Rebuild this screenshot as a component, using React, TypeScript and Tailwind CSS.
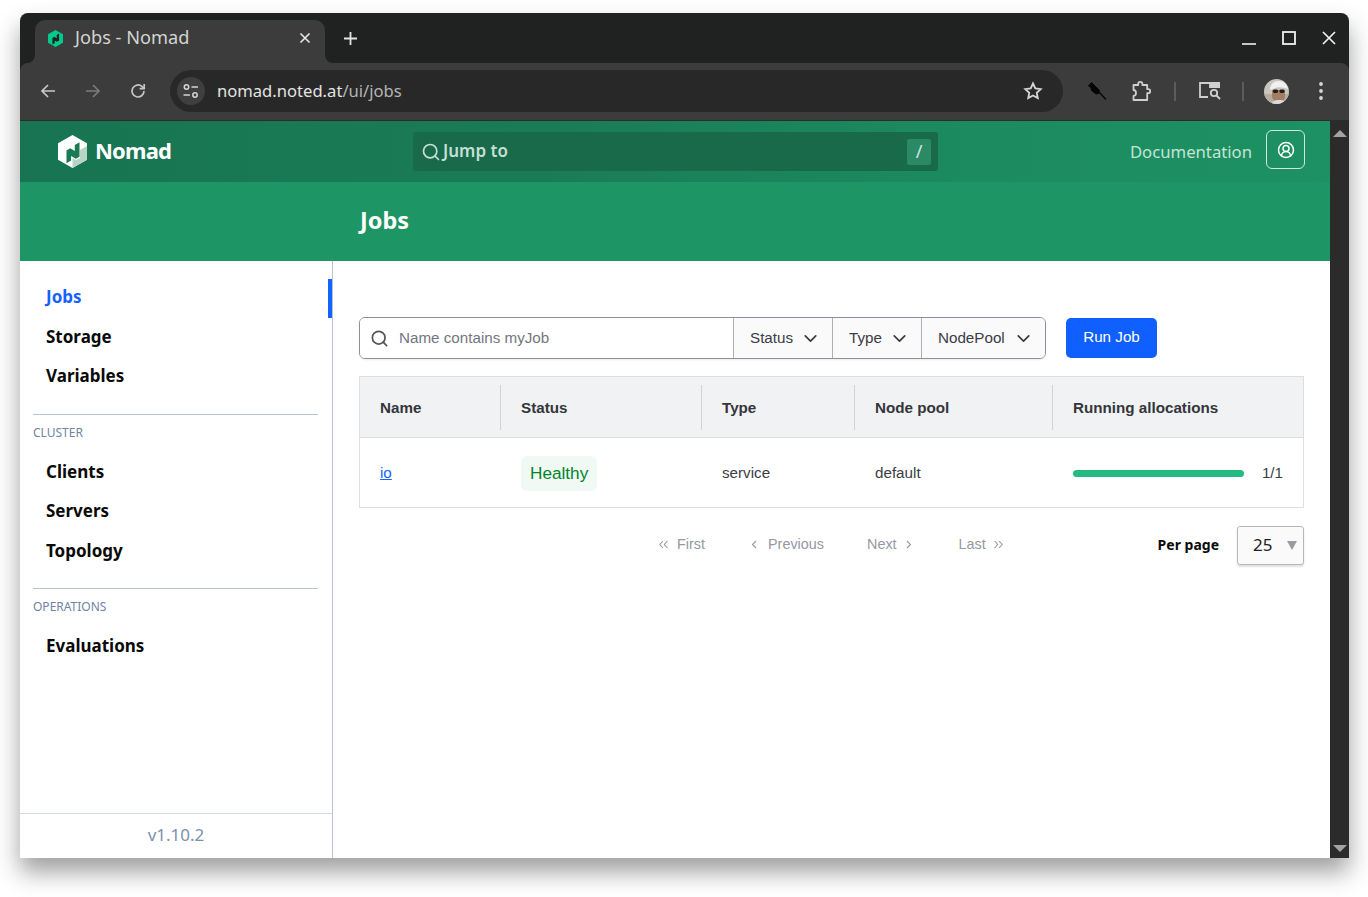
import React from 'react'
import { ChevronDown, Search, CircleUserRound } from 'lucide-react'

const uiFont = "font-['Noto_Sans',sans-serif]"
const tableFont = "font-['Liberation_Sans',Arial,sans-serif]"

const NomadLogo = () => (
  <svg width="29" height="33" viewBox="0 0 29 33">
    <path d="M14.5 0 0 8.25v16.5L14.5 33 29 24.75V8.25z" fill="#fff" />
    <path d="M14.5 33 29 24.75V11l-7 4v8l-4 2-3.5-2z" fill="#b9d3c8" />
    <path d="M21.5 7.3v14.4l-3.6 2.1-4.8-2.9v4.6l-4.6 2.8V15.4l3.7-2.2 4.6 2.7V10z" fill="#1a7a55" />
  </svg>
)

const Favicon = () => (
  <svg width="15" height="17" viewBox="0 0 29 33">
    <path d="M14.5 0 0 8.25v16.5L14.5 33 29 24.75V8.25z" fill="#00ca8e" />
    <path d="M21.5 6.8v13.6l-4 2.3-4.4-2.5v5l-4.6 2.8V15.4l3.7-2.2 4.6 2.6V9.6z" fill="#202221" />
  </svg>
)

const Avatar = () => (
  <svg className="ml-[20px] rounded-full" width="25" height="25" viewBox="0 0 25 25">
    <rect width="25" height="25" fill="#c9c6bd" />
    <rect y="15" width="25" height="10" fill="#b5ada0" />
    <path d="M8 11h13v6c0 4-3 6-6 6s-7-2-7-6z" fill="#a67d63" />
    <path d="M6 11C6 5 10 2 15 2s8 3 9 8l-3-1c-4-1-9-1-12 1z" fill="#f0f0f0" />
    <rect x="9" y="10.5" width="5" height="3.5" rx="1.4" fill="#1f1f22" />
    <rect x="15.5" y="10.5" width="5" height="3.5" rx="1.4" fill="#1f1f22" />
    <path d="M8 25c0-3 3-4 7-4s7 1 7 4z" fill="#d9dade" />
  </svg>
)

const TabStrip = () => (
  <div className="h-[50px] flex items-end pl-[15px]">
    <div className="relative w-[290px] h-[43px] bg-[#3c3c3c] rounded-t-[10px] flex items-center pl-[13px] pr-[14px] pb-[7px]">
      <span className="absolute left-[-8px] bottom-0 w-2 h-2 bg-[#3c3c3c]"><span className="block w-2 h-2 bg-[#202221] rounded-br-lg" /></span>
      <span className="absolute right-[-8px] bottom-0 w-2 h-2 bg-[#3c3c3c]"><span className="block w-2 h-2 bg-[#202221] rounded-bl-lg" /></span>
      <Favicon />
      <span className={`ml-[12px] text-[18.2px] leading-none text-[#d3d4d3] flex-1 mt-[-2px] ${uiFont}`}>Jobs - Nomad</span>
      <svg width="12" height="12" viewBox="0 0 12 12" stroke="#e8e8e8" strokeWidth="1.6"><path d="M1.5 1.5l9 9M10.5 1.5l-9 9" /></svg>
    </div>
    <div className="ml-[19px] mb-[18px]">
      <svg width="13" height="13" viewBox="0 0 13 13" stroke="#e4e4e4" strokeWidth="1.8"><path d="M6.5 0v13M0 6.5h13" /></svg>
    </div>
    <div className="ml-auto mb-[18px] flex items-center gap-[26px] pr-[13px]">
      <svg width="14" height="14" viewBox="0 0 14 14" stroke="#f0f0f0" strokeWidth="1.6"><path d="M0 13h14" /></svg>
      <svg width="14" height="14" viewBox="0 0 14 14" stroke="#f0f0f0" strokeWidth="1.8" fill="none"><rect x="1" y="1" width="12" height="12" /></svg>
      <svg width="14" height="14" viewBox="0 0 14 14" stroke="#f0f0f0" strokeWidth="1.7"><path d="M1 1l12 12M13 1 1 13" /></svg>
    </div>
  </div>
)

const Toolbar = () => (
  <div className="h-[58px] bg-[#3c3c3c] flex items-center rounded-t-lg pl-[20px] pb-[1px] border-b border-[#2c2c2c]">
    <svg width="16" height="16" viewBox="0 0 16 16" stroke="#c7c7c7" strokeWidth="1.7" fill="none"><path d="M15 8H2M8 2 2 8l6 6" /></svg>
    <svg className="ml-[29px]" width="16" height="16" viewBox="0 0 16 16" stroke="#7b7b7b" strokeWidth="1.7" fill="none"><path d="M1 8h13M8 2l6 6-6 6" /></svg>
    <svg className="ml-[29px]" width="16" height="16" viewBox="0 0 16 16" stroke="#c7c7c7" strokeWidth="1.7" fill="none"><path d="M14 8a6 6 0 1 1-1.9-4.4L14 5.4" /><path d="M14.2 1v4.6H9.6" /></svg>
    <div className="ml-[24px] w-[893px] h-[42px] rounded-full bg-[#282828] flex items-center pl-[7px] pr-[20px]">
      <div className="w-[28px] h-[28px] rounded-full bg-[#3f3f3f] flex items-center justify-center">
        <svg width="18" height="16" viewBox="0 0 18 16" stroke="#d5d5d5" strokeWidth="1.5" fill="none"><circle cx="4.5" cy="4" r="2.2" /><path d="M9.5 4H16M1.5 12H8" /><circle cx="13" cy="12" r="2.2" /></svg>
      </div>
      <span className={`ml-[12px] text-[16.6px] leading-none text-[#e3e3e3] flex-1 ${uiFont}`}>nomad.noted.at<span className="text-[#b4b4b4]">/ui/jobs</span></span>
      <svg width="20" height="20" viewBox="0 0 24 24" stroke="#d5d5d5" strokeWidth="2.2" fill="none"><path d="m12 3 2.8 5.9 6.4.8-4.7 4.4 1.2 6.4L12 17.4l-5.7 3.1 1.2-6.4-4.7-4.4 6.4-.8z" /></svg>
    </div>
    <svg className="ml-[24px]" width="20" height="20" viewBox="0 0 20 20" fill="#050505" stroke="#050505" strokeLinejoin="round"><path d="M4.5 1.5 1.5 5l2.5 1.5.5 3 4.5 3.5 2.5-.5 1-3L8 5 6.5 3.5z" /><path d="m11 10 8 8.5" strokeWidth="1.3" fill="none" /></svg>
    <svg className="ml-[25px]" width="20" height="20" viewBox="0 0 20 20" stroke="#cfcfcf" strokeWidth="1.8" fill="none" strokeLinejoin="round"><path d="M1.5 4h4.7V3a2.1 2.1 0 0 1 4.2 0v1h4.8v4.2h1a2 2 0 0 1 0 4h-1V19H1.5v-4c1.6 0 2.5-1.2 2.5-2.9S3.100 9 1.500 9z" /></svg>
    <div className="ml-[22px] w-[2px] h-[19px] bg-[#5c5c5c]" />
    <svg className="ml-[23px]" width="22" height="20" viewBox="0 0 22 20" stroke="#cfcfcf" strokeWidth="1.8" fill="none"><path d="M9 16H1V2h19v5" /><path d="M11 2h9v4h-9z" fill="#cfcfcf" /><circle cx="15" cy="12" r="3.2" /><path d="m17.500 14.500 3.500 3.500" /></svg>
    <div className="ml-[21px] w-[2px] h-[19px] bg-[#5c5c5c]" />
    <Avatar />
    <svg className="ml-[30px]" width="4" height="18" viewBox="0 0 4 18" fill="#d5d5d5"><circle cx="2" cy="2" r="1.9" /><circle cx="2" cy="9" r="1.9" /><circle cx="2" cy="16" r="1.9" /></svg>
  </div>
)

const NavItem = ({ label, active }: { label: string; active?: boolean }) => (
  <div className={`relative h-[39.5px] pl-[26px] flex items-center text-[17px] font-bold ${uiFont} ${active ? 'text-[#1563ff]' : 'text-[#0a0a0a]'}`}>
    {label}
    {active && <span className="absolute right-0 top-[2px] w-[4px] h-[39px] bg-[#1563ff]" />}
  </div>
)

const NavLabel = ({ label }: { label: string }) => (
  <div className={`ml-[13px] mr-[14px] mt-[18px] border-t border-[#b7c3d6] pt-[10px] pb-[11px] text-[12px] leading-[16px] text-[#6f83a3] ${uiFont}`}>{label}</div>
)

const Sidebar = () => (
  <div className="w-[313px] border-r border-[#b7c3d6] flex flex-col pt-[16px]">
    <NavItem label="Jobs" active />
    <NavItem label="Storage" />
    <NavItem label="Variables" />
    <NavLabel label="CLUSTER" />
    <NavItem label="Clients" />
    <NavItem label="Servers" />
    <NavItem label="Topology" />
    <NavLabel label="OPERATIONS" />
    <NavItem label="Evaluations" />
    <div className={`mt-auto h-[45px] border-t border-[#d5dbe5] flex items-center justify-center pb-[2px] text-[17px] text-[#7b90ae] ${uiFont}`}>v1.10.2</div>
  </div>
)

const FilterButton = ({ label, width }: { label: string; width: string }) => (
  <div className={`h-full ${width} border-l border-[#aeb0b8] bg-[#fafafa] flex items-center justify-between pl-[16px] pr-[11px] text-[15.2px] text-[#3b3d45]`}>
    {label}
    <ChevronDown size={21} strokeWidth={2} color="#3b3d45" />
  </div>
)

const HeadCell = ({ label, width, last }: { label: string; width: string; last?: boolean }) => (
  <div className={`${width} h-[45px] pl-[20px] pt-[2px] flex items-center font-bold text-[15.2px] text-[#34363b] ${last ? '' : 'border-r border-[#d0d2d6]'}`}>{label}</div>
)

const Chevrons = ({ d, width }: { d: string; width: number }) => (
  <svg width={width} height="9" viewBox={`0 0 ${width} 9`} stroke="#9698a3" strokeWidth="1.1" fill="none"><path d={d} /></svg>
)

const PageLink = ({ children, className }: { children: React.ReactNode; className: string }) => (
  <div className={`flex items-center text-[14.4px] text-[#9698a3] ${className}`}>{children}</div>
)

const JobsTable = () => (
  <div className={`mt-[17px] border border-[#dcdee2] ${tableFont}`}>
    <div className="h-[61px] bg-[#f1f2f3] border-b border-[#dcdee2] flex items-center">
      <HeadCell label="Name" width="w-[141px]" />
      <HeadCell label="Status" width="w-[201px]" />
      <HeadCell label="Type" width="w-[153px]" />
      <HeadCell label="Node pool" width="w-[198px]" />
      <HeadCell label="Running allocations" width="flex-1" last />
    </div>
    <div className="h-[69px] pt-[2px] flex items-center text-[15.2px] text-[#3b3d45]">
      <div className="w-[141px] pl-[20px]"><span className="text-[#1563ff] underline">io</span></div>
      <div className="w-[201px] pl-[20px]">
        <span className="inline-flex items-center h-[35px] px-[9px] rounded-[6px] bg-[#f0f9f4] text-[#00842c] text-[17.2px]">Healthy</span>
      </div>
      <div className="w-[153px] pl-[20px]">service</div>
      <div className="w-[198px] pl-[20px]">default</div>
      <div className="flex-1 pl-[20px] pr-[20px] flex items-center">
        <div className="w-[171px] h-[7px] rounded-full bg-[#25ba81]" />
        <span className="ml-auto">1/1</span>
      </div>
    </div>
  </div>
)

const Main = () => (
  <div className="flex-1 pl-[26px] pr-[26px] pt-[56px]">
    <div className="flex items-center">
      <div className={`w-[687px] h-[42px] border border-[#8e9099] rounded-[6px] flex overflow-hidden shadow-[0_1px_2px_rgba(0,0,0,0.08)] ${tableFont}`}>
        <div className="flex-1 flex items-center pl-[10px] bg-white">
          <Search size={19} strokeWidth={2.2} color="#555" />
          <span className="ml-[10px] text-[15.2px] text-[#74767e]">Name contains myJob</span>
        </div>
        <FilterButton label="Status" width="w-[99px]" />
        <FilterButton label="Type" width="w-[89px]" />
        <FilterButton label="NodePool" width="w-[124px]" />
      </div>
      <div className={`ml-[20px] w-[91px] h-[40px] rounded-[5px] bg-[#1060ff] text-white text-[15.2px] flex items-center justify-center pb-[2px] ${tableFont}`}>Run Job</div>
    </div>
    <JobsTable />
    <div className={`mt-[18px] flex items-center h-[39px] ${tableFont}`}>
      <div className="ml-[300px] flex items-center pb-[2px]">
        <PageLink className="gap-[9px]"><Chevrons width={9} d="M4 1 .8 4.500 4 8M8.500 1 5.300 4.500 8.500 8" /><span>First</span></PageLink>
        <PageLink className="ml-[46px] gap-[11px]"><Chevrons width={6} d="M5 1 1.500 4.500 5 8" /><span>Previous</span></PageLink>
        <PageLink className="ml-[43px] gap-[9px]"><span>Next</span><Chevrons width={6} d="M1 1l3.500 3.500L1 8" /></PageLink>
        <PageLink className="ml-[47px] gap-[8px]"><span>Last</span><Chevrons width={9} d="M.5 1l3.200 3.500L.5 8M5 1l3.200 3.500L5 8" /></PageLink>
      </div>
      <span className={`ml-auto text-[14px] font-bold text-[#0a0a0a] pb-[2px] ${uiFont}`}>Per page</span>
      <div className={`relative ml-[18px] w-[67px] h-[39px] border border-[#b5b7bd] rounded-[3px] bg-[#fafafa] flex items-center pl-[15px] pb-[2px] text-[17px] text-[#222] shadow-[0_2px_2px_rgba(0,0,0,0.12)] ${uiFont}`}>
        25
        <span className="absolute right-[6px] top-[14px] w-0 h-0 border-l-[5px] border-r-[5px] border-t-[9px] border-l-transparent border-r-transparent border-t-[#9a9ca3]" />
      </div>
    </div>
  </div>
)

const Scrollbar = () => (
  <div className="w-[19px] bg-[#2b2b2b] flex flex-col items-center justify-between pt-[9px] pb-[6px]">
    <span className="w-0 h-0 border-l-[7px] border-r-[7px] border-b-[7px] border-l-transparent border-r-transparent border-b-[#a3a3a3]" />
    <span className="w-0 h-0 border-l-[7px] border-r-[7px] border-t-[7px] border-l-transparent border-r-transparent border-t-[#a3a3a3]" />
  </div>
)

const App = () => {
  return (
    <div className="w-[1368px] h-[897px] bg-white pt-[13px] pl-[20px] overflow-hidden">
      <div className="w-[1329px] h-[845px] flex flex-col bg-[#202221] rounded-t-lg shadow-[0_14px_24px_rgba(0,0,0,0.38)]">
        <TabStrip />
        <Toolbar />
        <div className="flex-1 flex min-h-0">
          <div className="w-[1310px] flex flex-col bg-white">
            <div className={`h-[61px] bg-[linear-gradient(90deg,#187452_0%,#1a7c57_40%,#1c8c60_75%,#1d9163_100%)] flex items-center ${uiFont}`}>
              <div className="w-[393px] pl-[38px] flex items-center">
                <NomadLogo />
                <span className="ml-[8px] mt-[-3px] text-[22px] tracking-[-0.8px] font-bold text-white leading-none">Nomad</span>
              </div>
              <div className="w-[525px] h-[39px] rounded-[3px] bg-[#186a4b] flex items-center pl-[8px] pr-[7px]">
                <Search size={20} strokeWidth={2} color="#c6dfd4" />
                <span className="ml-[2px] mt-[-2px] text-[17px] font-semibold text-[#c6dfd4]">Jump to</span>
                <span className="ml-auto w-[24px] h-[26px] rounded-[2px] bg-[#2a8a66] text-[#d2e5dc] text-[18px] flex items-center justify-center">/</span>
              </div>
              <span className="ml-auto text-[16.7px] text-[#c5e4d6]">Documentation</span>
              <div className="ml-[14px] mr-[25px] mt-[-4px] w-[39px] h-[39px] rounded-[6px] border border-[#d5e6de] flex items-center justify-center">
                <CircleUserRound size={18} strokeWidth={2} color="#fff" />
              </div>
            </div>
            <div className={`h-[79px] bg-[#1e9565] pl-[340px] pb-[2px] flex items-center text-[23.5px] font-bold text-white ${uiFont}`}>Jobs</div>
            <div className="flex-1 flex min-h-0">
              <Sidebar />
              <Main />
            </div>
          </div>
          <Scrollbar />
        </div>
      </div>
    </div>
  )
}

export default App
